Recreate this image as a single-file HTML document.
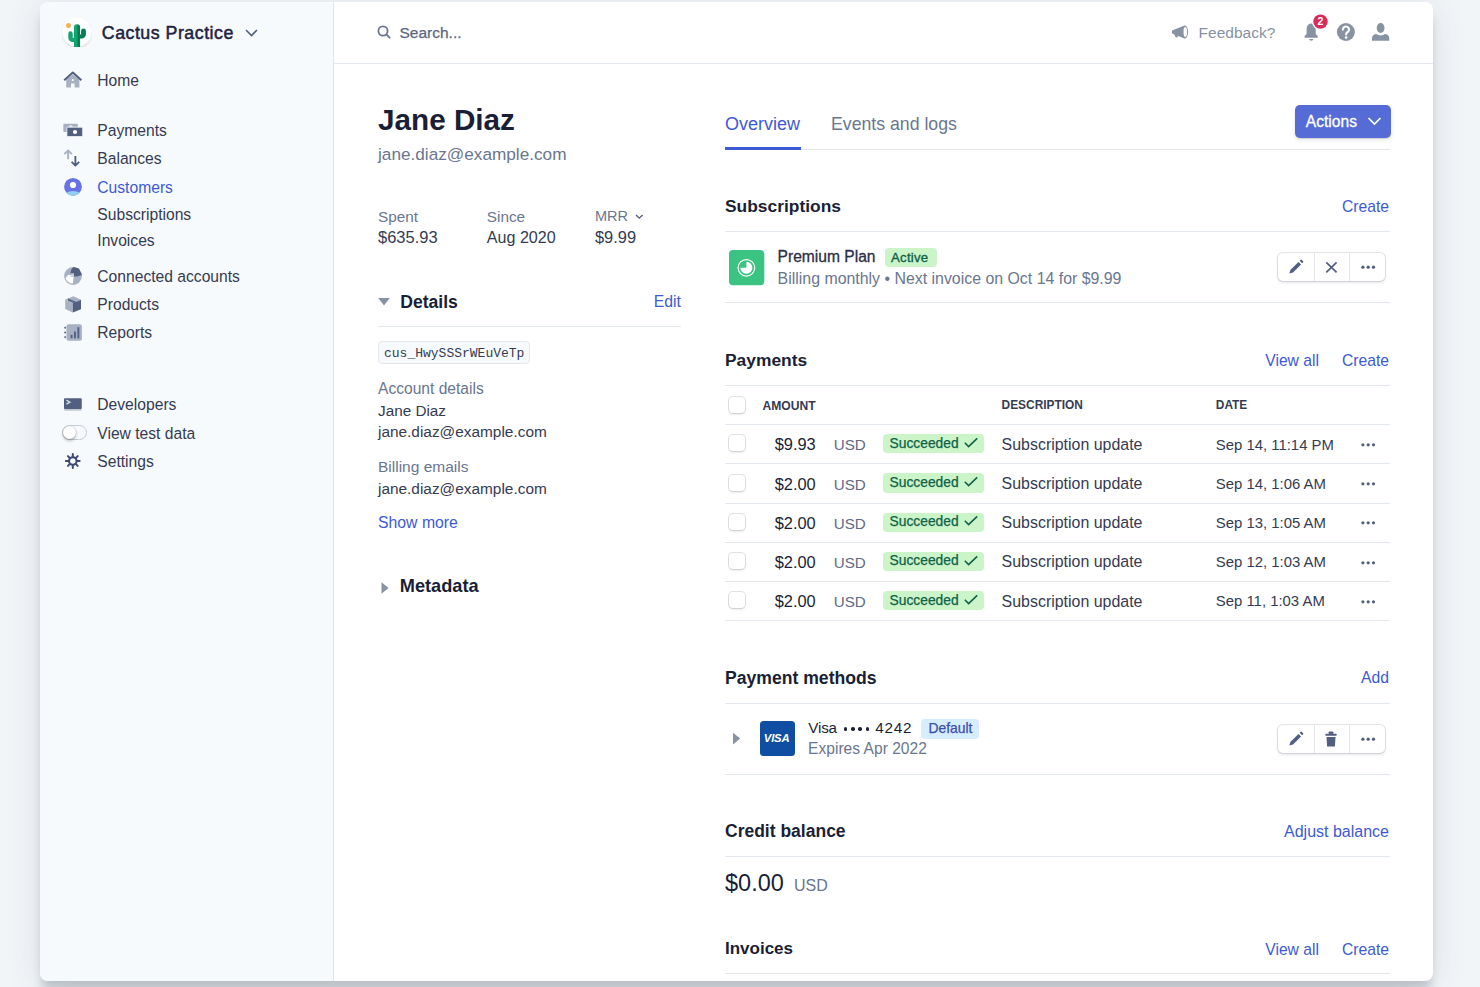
<!DOCTYPE html>
<html><head><meta charset="utf-8">
<style>
html,body{margin:0;padding:0;}
body{width:1480px;height:987px;overflow:hidden;position:relative;background:#f2f5f8;font-family:"Liberation Sans", sans-serif;}
#win{position:absolute;left:40px;top:2px;width:1393px;height:979px;background:#fff;border-radius:8px;box-shadow:0 12px 10px -2px rgba(40,50,70,0.20), 0 5px 34px rgba(50,60,80,0.13);}
.t{position:absolute;white-space:nowrap;}
.r{position:absolute;}
</style></head><body>
<div id="win"></div>
<div class="r" style="left:40px;top:2px;width:293px;height:979px;background:#f7fafc;border-radius:8px 0 0 8px;"></div>
<div class="r" style="left:333px;top:2px;width:1px;height:979px;background:#e0e5ee;"></div>
<svg class="r" style="left:62px;top:17px" width="30" height="30" viewBox="0 0 30 30">
<defs><filter id="ls" x="-20%" y="-20%" width="140%" height="140%"><feDropShadow dx="0" dy="1.2" stdDeviation="1.1" flood-color="#000" flood-opacity="0.16"/></filter></defs>
<circle cx="15" cy="15" r="14.5" fill="#fff" filter="url(#ls)"/>
<circle cx="6.5" cy="8.5" r="2.5" fill="#f0b35a"/>
<path d="M12 31 V10.5 A3.05 3.05 0 0 1 15.1 7.3 V31 Z" fill="#11a66f"/>
<path d="M15.1 7.3 A3.05 3.05 0 0 1 18.1 10.5 V31 H15.1 Z" fill="#0c7a52"/>
<path d="M6.3 16.4 A2.2 2.2 0 0 1 10.7 16.4 V20.8 H12.5 V25 H10.5 A4.2 4.2 0 0 1 6.3 20.8 Z" fill="#11a66f"/>
<path d="M19.1 13.9 A2.4 2.4 0 0 1 23.9 13.9 V17.4 A4.2 4.2 0 0 1 19.7 21.6 H17.8 V17.5 H19.1 Z" fill="#0c7a52"/>
</svg>
<div class="t" style="left:101.8px;top:24.63px;font-size:17.8px;line-height:17.8px;color:#1f2440;-webkit-text-stroke:0.5px #1f2440;letter-spacing:0.5px;">Cactus Practice</div>
<svg class="r" style="left:245px;top:29px" width="13" height="8" viewBox="0 0 13 8"><path d="M1 1 L6.5 6.5 L12 1" fill="none" stroke="#525f81" stroke-width="1.6"/></svg>
<div class="t" style="left:97.3px;top:72.85px;font-size:15.65px;line-height:15.65px;color:#353b52;">Home</div>
<div class="t" style="left:97.3px;top:122.85px;font-size:15.65px;line-height:15.65px;color:#353b52;">Payments</div>
<div class="t" style="left:97.3px;top:151.25px;font-size:15.65px;line-height:15.65px;color:#353b52;">Balances</div>
<div class="t" style="left:97.3px;top:179.55px;font-size:15.65px;line-height:15.65px;color:#3d5ad6;">Customers</div>
<div class="t" style="left:97.3px;top:206.85px;font-size:15.65px;line-height:15.65px;color:#353b52;">Subscriptions</div>
<div class="t" style="left:97.3px;top:232.95px;font-size:15.65px;line-height:15.65px;color:#353b52;">Invoices</div>
<div class="t" style="left:97.3px;top:268.85px;font-size:15.65px;line-height:15.65px;color:#353b52;">Connected accounts</div>
<div class="t" style="left:97.3px;top:297.05px;font-size:15.65px;line-height:15.65px;color:#353b52;">Products</div>
<div class="t" style="left:97.3px;top:325.25px;font-size:15.65px;line-height:15.65px;color:#353b52;">Reports</div>
<div class="t" style="left:97.3px;top:397.05px;font-size:15.65px;line-height:15.65px;color:#353b52;">Developers</div>
<div class="t" style="left:97.3px;top:425.65px;font-size:15.65px;line-height:15.65px;color:#353b52;">View test data</div>
<div class="t" style="left:97.3px;top:453.65px;font-size:15.65px;line-height:15.65px;color:#353b52;">Settings</div>
<div class="r" style="left:334px;top:63px;width:1099px;height:1px;background:#e3e8ee;"></div>
<svg class="r" style="left:377px;top:25px" width="14" height="14" viewBox="0 0 14 14"><circle cx="6" cy="6" r="4.6" fill="none" stroke="#6a7690" stroke-width="1.8"/><path d="M9.4 9.4 L12.6 12.6" stroke="#6a7690" stroke-width="2" stroke-linecap="round"/></svg>
<div class="t" style="left:399.5px;top:24.88px;font-size:15.5px;line-height:15.5px;color:#5b6680;-webkit-text-stroke:0.25px #5b6680;">Search...</div>
<div class="t" style="left:1198.6px;top:24.88px;font-size:15.5px;line-height:15.5px;color:#8792a2;">Feedback?</div>
<div class="t" style="left:378px;top:104.66px;font-size:29.7px;line-height:29.7px;color:#1a1f36;font-weight:700;">Jane Diaz</div>
<div class="t" style="left:378px;top:145.94px;font-size:17.2px;line-height:17.2px;color:#6a7690;">jane.diaz@example.com</div>
<div class="t" style="left:378px;top:208.65px;font-size:15.3px;line-height:15.3px;color:#6a7690;">Spent</div>
<div class="t" style="left:378px;top:228.83px;font-size:16.5px;line-height:16.5px;color:#353b52;">$635.93</div>
<div class="t" style="left:486.8px;top:208.65px;font-size:15.3px;line-height:15.3px;color:#6a7690;">Since</div>
<div class="t" style="left:486.8px;top:229.17px;font-size:16.1px;line-height:16.1px;color:#353b52;">Aug 2020</div>
<div class="t" style="left:595px;top:209.33px;font-size:14.5px;line-height:14.5px;color:#6a7690;">MRR</div>
<div class="t" style="left:595px;top:228.92px;font-size:16.4px;line-height:16.4px;color:#353b52;">$9.99</div>
<div class="t" style="left:400.2px;top:293.50px;font-size:17.6px;line-height:17.6px;color:#1a1f36;font-weight:700;">Details</div>
<div class="t" style="right:799px;top:294.23px;font-size:15.8px;line-height:15.8px;color:#3d5ad6;">Edit</div>
<div class="r" style="left:378px;top:326px;width:303px;height:1px;background:#e3e8ee;"></div>
<div class="t" style="left:378px;top:380.79px;font-size:15.6px;line-height:15.6px;color:#6a7690;">Account details</div>
<div class="t" style="left:378px;top:402.65px;font-size:15.3px;line-height:15.3px;color:#353b52;">Jane Diaz</div>
<div class="t" style="left:378px;top:424.06px;font-size:15.4px;line-height:15.4px;color:#353b52;">jane.diaz@example.com</div>
<div class="t" style="left:378px;top:458.98px;font-size:15.5px;line-height:15.5px;color:#6a7690;">Billing emails</div>
<div class="t" style="left:378px;top:481.06px;font-size:15.4px;line-height:15.4px;color:#353b52;">jane.diaz@example.com</div>
<div class="t" style="left:378px;top:514.93px;font-size:15.8px;line-height:15.8px;color:#3d5ad6;">Show more</div>
<div class="t" style="left:399.8px;top:577.09px;font-size:18.2px;line-height:18.2px;color:#1a1f36;font-weight:700;">Metadata</div>
<div class="t" style="left:725px;top:115.26px;font-size:18px;line-height:18px;color:#3d5ad6;">Overview</div>
<div class="t" style="left:831px;top:115.52px;font-size:17.7px;line-height:17.7px;color:#6a7690;">Events and logs</div>
<div class="r" style="left:725px;top:149px;width:665px;height:1px;background:#e3e8ee;"></div>
<div class="r" style="left:725px;top:147px;width:76px;height:3px;background:#3d5ad6;"></div>
<div class="t" style="left:725px;top:198.27px;font-size:17.4px;line-height:17.4px;color:#1a1f36;font-weight:700;">Subscriptions</div>
<div class="t" style="right:91px;top:198.71px;font-size:15.7px;line-height:15.7px;color:#3d5ad6;">Create</div>
<div class="r" style="left:725px;top:231px;width:665px;height:1px;background:#e3e8ee;"></div>
<div class="t" style="left:777.6px;top:248.79px;font-size:15.6px;line-height:15.6px;color:#2a2f45;-webkit-text-stroke:0.3px #2a2f45;">Premium Plan</div>
<div class="t" style="left:777.6px;top:270.54px;font-size:15.9px;line-height:15.9px;color:#6a7690;">Billing monthly • Next invoice on Oct 14 for $9.99</div>
<div class="r" style="left:725px;top:302px;width:665px;height:1px;background:#e3e8ee;"></div>
<div class="t" style="left:725px;top:351.77px;font-size:17.4px;line-height:17.4px;color:#1a1f36;font-weight:700;">Payments</div>
<div class="t" style="right:161px;top:352.71px;font-size:15.7px;line-height:15.7px;color:#3d5ad6;">View all</div>
<div class="t" style="right:91px;top:352.71px;font-size:15.7px;line-height:15.7px;color:#3d5ad6;">Create</div>
<div class="r" style="left:725px;top:385px;width:665px;height:1px;background:#e3e8ee;"></div>
<div class="t" style="left:762.5px;top:400.26px;font-size:12.1px;line-height:12.1px;color:#353b52;font-weight:700;">AMOUNT</div>
<div class="t" style="left:1001.6px;top:400.43px;font-size:11.9px;line-height:11.9px;color:#353b52;font-weight:700;">DESCRIPTION</div>
<div class="t" style="left:1215.8px;top:400.43px;font-size:11.9px;line-height:11.9px;color:#353b52;font-weight:700;">DATE</div>
<div class="r" style="left:725px;top:424px;width:665px;height:1px;background:#e3e8ee;"></div>
<div class="t" style="right:664.3px;top:436.32px;font-size:16.4px;line-height:16.4px;color:#1a1f36;">$9.93</div>
<div class="t" style="left:833.7px;top:437.33px;font-size:15.2px;line-height:15.2px;color:#5f6b85;">USD</div>
<div class="t" style="left:1001.6px;top:436.70px;font-size:15.95px;line-height:15.95px;color:#353b52;">Subscription update</div>
<div class="t" style="left:1215.8px;top:437.59px;font-size:14.9px;line-height:14.9px;color:#353b52;">Sep 14, 11:14 PM</div>
<div class="r" style="left:725px;top:463px;width:665px;height:1px;background:#e3e8ee;"></div>
<div class="t" style="right:664.3px;top:475.52px;font-size:16.4px;line-height:16.4px;color:#1a1f36;">$2.00</div>
<div class="t" style="left:833.7px;top:476.53px;font-size:15.2px;line-height:15.2px;color:#5f6b85;">USD</div>
<div class="t" style="left:1001.6px;top:475.90px;font-size:15.95px;line-height:15.95px;color:#353b52;">Subscription update</div>
<div class="t" style="left:1215.8px;top:476.79px;font-size:14.9px;line-height:14.9px;color:#353b52;">Sep 14, 1:06 AM</div>
<div class="r" style="left:725px;top:503px;width:665px;height:1px;background:#e3e8ee;"></div>
<div class="t" style="right:664.3px;top:514.72px;font-size:16.4px;line-height:16.4px;color:#1a1f36;">$2.00</div>
<div class="t" style="left:833.7px;top:515.73px;font-size:15.2px;line-height:15.2px;color:#5f6b85;">USD</div>
<div class="t" style="left:1001.6px;top:515.10px;font-size:15.95px;line-height:15.95px;color:#353b52;">Subscription update</div>
<div class="t" style="left:1215.8px;top:515.99px;font-size:14.9px;line-height:14.9px;color:#353b52;">Sep 13, 1:05 AM</div>
<div class="r" style="left:725px;top:542px;width:665px;height:1px;background:#e3e8ee;"></div>
<div class="t" style="right:664.3px;top:553.92px;font-size:16.4px;line-height:16.4px;color:#1a1f36;">$2.00</div>
<div class="t" style="left:833.7px;top:554.93px;font-size:15.2px;line-height:15.2px;color:#5f6b85;">USD</div>
<div class="t" style="left:1001.6px;top:554.30px;font-size:15.95px;line-height:15.95px;color:#353b52;">Subscription update</div>
<div class="t" style="left:1215.8px;top:555.19px;font-size:14.9px;line-height:14.9px;color:#353b52;">Sep 12, 1:03 AM</div>
<div class="r" style="left:725px;top:581px;width:665px;height:1px;background:#e3e8ee;"></div>
<div class="t" style="right:664.3px;top:593.12px;font-size:16.4px;line-height:16.4px;color:#1a1f36;">$2.00</div>
<div class="t" style="left:833.7px;top:594.13px;font-size:15.2px;line-height:15.2px;color:#5f6b85;">USD</div>
<div class="t" style="left:1001.6px;top:593.50px;font-size:15.95px;line-height:15.95px;color:#353b52;">Subscription update</div>
<div class="t" style="left:1215.8px;top:594.39px;font-size:14.9px;line-height:14.9px;color:#353b52;">Sep 11, 1:03 AM</div>
<div class="r" style="left:725px;top:620px;width:665px;height:1px;background:#e3e8ee;"></div>
<div class="t" style="left:725px;top:669.60px;font-size:17.6px;line-height:17.6px;color:#1a1f36;font-weight:700;">Payment methods</div>
<div class="t" style="right:91px;top:669.71px;font-size:15.7px;line-height:15.7px;color:#3d5ad6;">Add</div>
<div class="r" style="left:725px;top:703px;width:665px;height:1px;background:#e3e8ee;"></div>
<div class="t" style="left:808.3px;top:720.13px;font-size:15.2px;line-height:15.2px;color:#1a1f36;letter-spacing:-0.2px;">Visa</div>
<div class="r" style="left:843.7px;top:727.2px;width:3.6px;height:3.6px;background:#1a1f36;border-radius:50%;"></div>
<div class="r" style="left:851.2px;top:727.2px;width:3.6px;height:3.6px;background:#1a1f36;border-radius:50%;"></div>
<div class="r" style="left:858.4000000000001px;top:727.2px;width:3.6px;height:3.6px;background:#1a1f36;border-radius:50%;"></div>
<div class="r" style="left:865.7px;top:727.2px;width:3.6px;height:3.6px;background:#1a1f36;border-radius:50%;"></div>
<div class="t" style="left:875.3px;top:719.85px;font-size:15.3px;line-height:15.3px;color:#1a1f36;letter-spacing:0.7px;">4242</div>
<div class="t" style="left:808.1px;top:741.49px;font-size:15.6px;line-height:15.6px;color:#6a7690;">Expires Apr 2022</div>
<div class="r" style="left:725px;top:774px;width:665px;height:1px;background:#e3e8ee;"></div>
<div class="t" style="left:725px;top:822.69px;font-size:17.5px;line-height:17.5px;color:#1a1f36;font-weight:700;">Credit balance</div>
<div class="t" style="right:91px;top:823.96px;font-size:16px;line-height:16px;color:#3d5ad6;">Adjust balance</div>
<div class="r" style="left:725px;top:856px;width:665px;height:1px;background:#e3e8ee;"></div>
<div class="t" style="left:725px;top:871.61px;font-size:23.5px;line-height:23.5px;color:#1a1f36;">$0.00</div>
<div class="t" style="left:794px;top:877.96px;font-size:16px;line-height:16px;color:#6a7690;">USD</div>
<div class="t" style="left:725px;top:939.81px;font-size:17px;line-height:17px;color:#1a1f36;font-weight:700;">Invoices</div>
<div class="t" style="right:161px;top:941.71px;font-size:15.7px;line-height:15.7px;color:#3d5ad6;">View all</div>
<div class="t" style="right:91px;top:941.71px;font-size:15.7px;line-height:15.7px;color:#3d5ad6;">Create</div>
<div class="r" style="left:725px;top:973px;width:665px;height:1px;background:#e3e8ee;"></div>
<svg class="r" style="left:63px;top:71px" width="20" height="18" viewBox="0 0 20 18">
<path d="M3.2 8.5 V16.5 H8 V12.5 H11.6 V16.5 H16.4 V8.5 L9.8 3.5 Z" fill="#a8b1c4"/>
<path d="M1.2 9.3 L9.8 1.6 L18.4 9.3" fill="none" stroke="#525f81" stroke-width="2" stroke-linejoin="round"/>
<circle cx="9.8" cy="9" r="1.1" fill="#fff"/>
</svg>
<svg class="r" style="left:62px;top:122px" width="22" height="16" viewBox="0 0 22 16">
<rect x="1.3" y="1.7" width="14.6" height="8.2" rx="1" fill="#a8b1c4"/>
<circle cx="8.7" cy="5" r="2" fill="#fff" opacity="0.6"/>
<rect x="4.9" y="5.2" width="15.8" height="9.4" rx="1.3" fill="#525f81" stroke="#f7fafc" stroke-width="0.8"/>
<circle cx="13" cy="10" r="2.1" fill="#fff"/>
</svg>
<svg class="r" style="left:62px;top:148px" width="20" height="20" viewBox="0 0 20 20">
<path d="M6.1 11.3 V2.5 M2.3 6.2 L6.1 2.4 L9.9 6.2" fill="none" stroke="#a8b1c4" stroke-width="1.9" stroke-linejoin="round"/>
<path d="M13.4 8 V17.6 M9.6 13.8 L13.4 17.6 L17.2 13.8" fill="none" stroke="#525f81" stroke-width="1.9" stroke-linejoin="round"/>
</svg>
<svg class="r" style="left:63px;top:177px" width="20" height="20" viewBox="0 0 20 20">
<defs><clipPath id="cc"><circle cx="10" cy="9.8" r="8.9"/></clipPath></defs>
<circle cx="10" cy="9.8" r="8.9" fill="#6772e5"/>
<g clip-path="url(#cc)"><ellipse cx="10" cy="20.5" rx="10" ry="6.5" fill="#8ed0ed"/></g>
<circle cx="10" cy="8" r="3.1" fill="#fff"/>
</svg>
<svg class="r" style="left:63px;top:266px" width="20" height="20" viewBox="0 0 20 20">
<circle cx="10" cy="10" r="8.9" fill="#a8b1c4"/>
<path d="M7.5 8.5 A8.9 8.9 0 0 1 10.5 1.1 L16 2.5 L19 9 L14 10.5 L11 10.5 Z" fill="#525f81"/>
<path d="M2.5 12 A8 8 0 0 0 10 17.5 L10.5 11 L9 9 L5 9 Z" fill="#fff"/>
<rect x="7.6" y="7.3" width="3.4" height="3.6" fill="#c8ced8"/>
</svg>
<svg class="r" style="left:63px;top:295px" width="20" height="20" viewBox="0 0 20 20">
<path d="M2.2 4.6 L10.4 1.3 L18 4.8 L9.8 8.2 Z" fill="#a8b1c4"/>
<path d="M2.2 4.6 L9.8 8.2 L9.8 17.5 L2.2 14.1 Z" fill="#a8b1c4"/>
<path d="M9.8 8.2 L18 4.8 L18 14.2 L9.8 17.5 Z" fill="#525f81"/>
<path d="M5 3.5 L13 6.8 L13 9 L5 5.8 Z" fill="#525f81" opacity="0.9"/>
</svg>
<svg class="r" style="left:63px;top:323px" width="20" height="20" viewBox="0 0 20 20">
<rect x="3.5" y="1.2" width="15.4" height="16.6" rx="2" fill="#a8b1c4"/>
<circle cx="2.2" cy="4.8" r="1.3" fill="#525f81" stroke="#fff" stroke-width="0.6"/>
<circle cx="2.2" cy="9.5" r="1.3" fill="#525f81" stroke="#fff" stroke-width="0.6"/>
<circle cx="2.2" cy="14.1" r="1.3" fill="#525f81" stroke="#fff" stroke-width="0.6"/>
<rect x="7.6" y="11.8" width="1.9" height="3.5" fill="#525f81"/>
<rect x="11" y="8.5" width="1.9" height="6.8" fill="#525f81"/>
<rect x="14.4" y="4.2" width="1.9" height="11.1" fill="#525f81"/>
</svg>
<svg class="r" style="left:63px;top:395.5px" width="20" height="16" viewBox="0 0 20 16">
<rect x="1" y="3.8" width="17.7" height="11" rx="1" fill="#c1c9d2"/>
<rect x="1" y="2.2" width="17.7" height="10.8" rx="1" fill="#525f81"/>
<path d="M3.4 4.2 L6.9 6.2 L3.4 8.2" fill="none" stroke="#d5dbe3" stroke-width="1.4"/>
</svg>
<div class="r" style="left:62px;top:425px;width:23px;height:13px;border:1px solid #c6cdd6;border-radius:8px;background:#f7fafc;"></div>
<div class="r" style="left:62.5px;top:425.5px;width:13.5px;height:13.5px;border-radius:50%;background:#fff;box-shadow:0 2px 3px rgba(0,0,0,0.25), 0 0 0 0.6px rgba(0,0,0,0.14);"></div>
<svg class="r" style="left:63px;top:451px" width="20" height="20" viewBox="0 0 20 20">
<g transform="translate(9.8 10)" stroke="#3d4a75" stroke-width="2.0" stroke-linecap="round">
<path d="M0 -6.9 V6.9 M-6.9 0 H6.9 M-4.9 -4.9 L4.9 4.9 M-4.9 4.9 L4.9 -4.9"/>
</g>
<circle cx="9.8" cy="10" r="4.8" fill="#3d4a75"/>
<circle cx="9.8" cy="10" r="2.7" fill="#f7fafc"/>
</svg>
<svg class="r" style="left:1170px;top:24px" width="20" height="16" viewBox="0 0 20 16">
<path d="M2 6.5 L14.5 1.5 L14.5 14.5 L2 9.5 Z" fill="#8792a2"/>
<path d="M4.2 9.5 L5.5 13.2 L7.6 13.6 L7.8 10.7 Z" fill="#8792a2"/>
<ellipse cx="15" cy="8" rx="3.1" ry="6.5" fill="#8792a2"/>
<ellipse cx="15.3" cy="8" rx="1.8" ry="5" fill="#fff"/>
</svg>
<svg class="r" style="left:1300px;top:12px" width="32" height="32" viewBox="0 0 32 32">
<path d="M11 11.5 C7.5 11.8 6.6 15 6.6 18 V22 L4.6 24 V25.7 H17.7 V24 L15.7 22 V18 C15.7 15 14.8 11.8 11 11.5 Z" fill="#8792a2"/>
<path d="M9 27 H13.5 A2.3 2.1 0 0 1 9 27 Z" fill="#8792a2"/>
<circle cx="20.5" cy="9.6" r="8.5" fill="#fff"/>
<circle cx="20.5" cy="9.6" r="7.2" fill="#d92a5a"/>
<text x="20.5" y="13.4" text-anchor="middle" font-family="Liberation Sans" font-weight="700" font-size="10.5" fill="#fff">2</text>
</svg>
<svg class="r" style="left:1336px;top:22px" width="20" height="20" viewBox="0 0 20 20">
<circle cx="9.9" cy="10" r="9" fill="#8792a2"/>
<path d="M6.9 7.6 A3.1 3 0 1 1 11.7 10 C10.6 10.6 10.1 11 10.1 12.5" fill="none" stroke="#fff" stroke-width="2.1" stroke-linecap="round"/>
<circle cx="10.1" cy="15.5" r="1.35" fill="#fff"/>
</svg>
<svg class="r" style="left:1371px;top:22px" width="20" height="20" viewBox="0 0 20 20">
<ellipse cx="9.6" cy="6" rx="3.9" ry="4.9" fill="#8792a2"/>
<path d="M1 18.7 V16.5 C1 13.6 3 12 5.5 12 H13.7 C16.2 12 18.3 13.6 18.3 16.5 V18.7 Z" fill="#8792a2"/>
<path d="M5.5 11.5 Q9.6 14 13.7 11.5" fill="none" stroke="#fff" stroke-width="1.3"/>
</svg>
<svg class="r" style="left:634px;top:213px" width="10" height="7" viewBox="0 0 10 7"><path d="M2 2 L5.3 5.2 L8.6 2" fill="none" stroke="#4f5b76" stroke-width="1.3"/></svg>
<svg class="r" style="left:377px;top:297px" width="14" height="10" viewBox="0 0 14 10"><path d="M1.2 1 H12.8 L7 8.4 Z" fill="#8792a2"/></svg>
<div class="r" style="left:378px;top:340.5px;width:151.5px;height:23px;background:#f7fafc;border:1px solid #e3e8ee;border-radius:4px;box-sizing:border-box;"></div>
<div class="t" style="left:384px;top:346.50px;font-size:13.0px;line-height:13.0px;color:#353b52;font-family:'Liberation Mono', monospace;">cus_HwySSSrWEuVeTp</div>
<svg class="r" style="left:379px;top:580px" width="12" height="16" viewBox="0 0 12 16"><path d="M2.5 2.2 V13.8 L9.6 8 Z" fill="#8792a2"/></svg>
<div class="r" style="left:1295px;top:105px;width:96px;height:33px;background:#556cd6;border-radius:5px;box-shadow:0 1px 1px rgba(0,0,0,0.12), 0 2px 5px rgba(60,66,87,0.12);"></div>
<div class="t" style="left:1305.8px;top:113.99px;font-size:15.6px;line-height:15.6px;color:#fff;-webkit-text-stroke:0.3px #fff;">Actions</div>
<svg class="r" style="left:1367px;top:116px" width="15" height="10" viewBox="0 0 15 10"><path d="M1.5 2 L7.5 8 L13.5 2" fill="none" stroke="#fff" stroke-width="1.7"/></svg>
<svg class="r" style="left:729px;top:249.5px" width="36" height="36" viewBox="0 0 36 36">
<rect x="0" y="0" width="35.3" height="35.3" rx="4" fill="#3ac381"/>
<circle cx="17.4" cy="17.8" r="8.3" fill="none" stroke="#fff" stroke-width="1.25"/>
<path d="M17.4 17.8 V11.8 A6 6 0 1 1 11.4 17.8 Z" fill="#fff"/>
</svg>
<div class="r" style="left:884.5px;top:247.5px;width:52.5px;height:19.5px;background:#cbf4c9;border-radius:4px;"></div>
<div class="t" style="left:891px;top:250.83px;font-size:13.2px;line-height:13.2px;color:#0e6245;-webkit-text-stroke:0.35px #0e6245;letter-spacing:0.25px;">Active</div>
<div class="r" style="left:1278px;top:253.3px;width:107px;height:27.5px;background:#fff;border-radius:5px;box-shadow:0 0 0 1px rgba(60,66,87,0.14), 0 2px 3px rgba(60,66,87,0.12);"></div>
<div class="r" style="left:1313.5px;top:253.3px;width:1px;height:27.5px;background:rgba(60,66,87,0.14);"></div>
<div class="r" style="left:1349.3px;top:253.3px;width:1px;height:27.5px;background:rgba(60,66,87,0.14);"></div>
<svg class="r" style="left:1287px;top:259.3px" width="18" height="16" viewBox="0 0 18 16">
<path d="M2.4 14.6 L3.4 11 L11.5 2.9 L14.1 5.5 L6 13.6 Z" fill="#525f81"/>
<path d="M12.6 1.8 L13.5 0.9 A0.9 0.9 0 0 1 14.8 0.9 L16 2.1 A0.9 0.9 0 0 1 16 3.4 L15.2 4.3 Z" fill="#525f81"/>
</svg>
<svg class="r" style="left:1323px;top:260.3px" width="16" height="14" viewBox="0 0 16 14"><path d="M3.3 2.3 L13.6 12.4 M13.6 2.3 L3.3 12.4" stroke="#525f81" stroke-width="1.7"/></svg>
<svg class="r" style="left:1359px;top:262.3px" width="18" height="10" viewBox="0 0 18 10">
<circle cx="3.9" cy="5.2" r="1.65" fill="#525f81"/><circle cx="9.2" cy="5.2" r="1.65" fill="#525f81"/><circle cx="14.5" cy="5.2" r="1.65" fill="#525f81"/></svg>
<div class="r" style="left:1278px;top:725px;width:107px;height:27.5px;background:#fff;border-radius:5px;box-shadow:0 0 0 1px rgba(60,66,87,0.14), 0 2px 3px rgba(60,66,87,0.12);"></div>
<div class="r" style="left:1313.5px;top:725px;width:1px;height:27.5px;background:rgba(60,66,87,0.14);"></div>
<div class="r" style="left:1349.3px;top:725px;width:1px;height:27.5px;background:rgba(60,66,87,0.14);"></div>
<svg class="r" style="left:1287px;top:731px" width="18" height="16" viewBox="0 0 18 16">
<path d="M2.4 14.6 L3.4 11 L11.5 2.9 L14.1 5.5 L6 13.6 Z" fill="#525f81"/>
<path d="M12.6 1.8 L13.5 0.9 A0.9 0.9 0 0 1 14.8 0.9 L16 2.1 A0.9 0.9 0 0 1 16 3.4 L15.2 4.3 Z" fill="#525f81"/>
</svg>
<svg class="r" style="left:1323px;top:730px" width="16" height="18" viewBox="0 0 16 18">
<rect x="5.5" y="1.5" width="5" height="2.5" rx="1" fill="#525f81"/><rect x="2.3" y="3.8" width="11.4" height="2" rx="0.8" fill="#525f81"/>
<path d="M3.5 7 H12.5 L11.9 16.5 H4.1 Z" fill="#525f81"/></svg>
<svg class="r" style="left:1359px;top:734px" width="18" height="10" viewBox="0 0 18 10">
<circle cx="3.9" cy="5.2" r="1.65" fill="#525f81"/><circle cx="9.2" cy="5.2" r="1.65" fill="#525f81"/><circle cx="14.5" cy="5.2" r="1.65" fill="#525f81"/></svg>
<div class="r" style="left:728.5px;top:396.5px;width:16.5px;height:16px;background:#fff;border-radius:4px;box-shadow:0 0 0 1px rgba(60,66,87,0.16), 0 2px 2px rgba(60,66,87,0.10);"></div>
<div class="r" style="left:728.5px;top:435.3px;width:16.5px;height:16px;background:#fff;border-radius:4px;box-shadow:0 0 0 1px rgba(60,66,87,0.16), 0 2px 2px rgba(60,66,87,0.10);"></div>
<div class="r" style="left:882.5px;top:434.2px;width:101px;height:19.2px;background:#cbf4c9;border-radius:4px;"></div>
<div class="t" style="left:889.6px;top:436.72px;font-size:13.8px;line-height:13.8px;color:#0e6245;-webkit-text-stroke:0.25px #0e6245;">Succeeded</div>
<svg class="r" style="left:963px;top:437.0px" width="16" height="12" viewBox="0 0 16 12"><path d="M1.8 5.8 L5.6 9.6 L14.2 1.4" fill="none" stroke="#0e6245" stroke-width="1.6"/></svg>
<svg class="r" style="left:1359px;top:440.0px" width="18" height="10" viewBox="0 0 18 10">
<circle cx="3.9" cy="4.8" r="1.6" fill="#525f81"/><circle cx="9.2" cy="4.8" r="1.6" fill="#525f81"/><circle cx="14.5" cy="4.8" r="1.6" fill="#525f81"/></svg>
<div class="r" style="left:728.5px;top:474.5px;width:16.5px;height:16px;background:#fff;border-radius:4px;box-shadow:0 0 0 1px rgba(60,66,87,0.16), 0 2px 2px rgba(60,66,87,0.10);"></div>
<div class="r" style="left:882.5px;top:473.4px;width:101px;height:19.2px;background:#cbf4c9;border-radius:4px;"></div>
<div class="t" style="left:889.6px;top:475.92px;font-size:13.8px;line-height:13.8px;color:#0e6245;-webkit-text-stroke:0.25px #0e6245;">Succeeded</div>
<svg class="r" style="left:963px;top:476.2px" width="16" height="12" viewBox="0 0 16 12"><path d="M1.8 5.8 L5.6 9.6 L14.2 1.4" fill="none" stroke="#0e6245" stroke-width="1.6"/></svg>
<svg class="r" style="left:1359px;top:479.2px" width="18" height="10" viewBox="0 0 18 10">
<circle cx="3.9" cy="4.8" r="1.6" fill="#525f81"/><circle cx="9.2" cy="4.8" r="1.6" fill="#525f81"/><circle cx="14.5" cy="4.8" r="1.6" fill="#525f81"/></svg>
<div class="r" style="left:728.5px;top:513.7px;width:16.5px;height:16px;background:#fff;border-radius:4px;box-shadow:0 0 0 1px rgba(60,66,87,0.16), 0 2px 2px rgba(60,66,87,0.10);"></div>
<div class="r" style="left:882.5px;top:512.6px;width:101px;height:19.2px;background:#cbf4c9;border-radius:4px;"></div>
<div class="t" style="left:889.6px;top:515.12px;font-size:13.8px;line-height:13.8px;color:#0e6245;-webkit-text-stroke:0.25px #0e6245;">Succeeded</div>
<svg class="r" style="left:963px;top:515.4px" width="16" height="12" viewBox="0 0 16 12"><path d="M1.8 5.8 L5.6 9.6 L14.2 1.4" fill="none" stroke="#0e6245" stroke-width="1.6"/></svg>
<svg class="r" style="left:1359px;top:518.4px" width="18" height="10" viewBox="0 0 18 10">
<circle cx="3.9" cy="4.8" r="1.6" fill="#525f81"/><circle cx="9.2" cy="4.8" r="1.6" fill="#525f81"/><circle cx="14.5" cy="4.8" r="1.6" fill="#525f81"/></svg>
<div class="r" style="left:728.5px;top:552.9px;width:16.5px;height:16px;background:#fff;border-radius:4px;box-shadow:0 0 0 1px rgba(60,66,87,0.16), 0 2px 2px rgba(60,66,87,0.10);"></div>
<div class="r" style="left:882.5px;top:551.8px;width:101px;height:19.2px;background:#cbf4c9;border-radius:4px;"></div>
<div class="t" style="left:889.6px;top:554.32px;font-size:13.8px;line-height:13.8px;color:#0e6245;-webkit-text-stroke:0.25px #0e6245;">Succeeded</div>
<svg class="r" style="left:963px;top:554.6px" width="16" height="12" viewBox="0 0 16 12"><path d="M1.8 5.8 L5.6 9.6 L14.2 1.4" fill="none" stroke="#0e6245" stroke-width="1.6"/></svg>
<svg class="r" style="left:1359px;top:557.6px" width="18" height="10" viewBox="0 0 18 10">
<circle cx="3.9" cy="4.8" r="1.6" fill="#525f81"/><circle cx="9.2" cy="4.8" r="1.6" fill="#525f81"/><circle cx="14.5" cy="4.8" r="1.6" fill="#525f81"/></svg>
<div class="r" style="left:728.5px;top:592.1px;width:16.5px;height:16px;background:#fff;border-radius:4px;box-shadow:0 0 0 1px rgba(60,66,87,0.16), 0 2px 2px rgba(60,66,87,0.10);"></div>
<div class="r" style="left:882.5px;top:591.0px;width:101px;height:19.2px;background:#cbf4c9;border-radius:4px;"></div>
<div class="t" style="left:889.6px;top:593.52px;font-size:13.8px;line-height:13.8px;color:#0e6245;-webkit-text-stroke:0.25px #0e6245;">Succeeded</div>
<svg class="r" style="left:963px;top:593.8px" width="16" height="12" viewBox="0 0 16 12"><path d="M1.8 5.8 L5.6 9.6 L14.2 1.4" fill="none" stroke="#0e6245" stroke-width="1.6"/></svg>
<svg class="r" style="left:1359px;top:596.8px" width="18" height="10" viewBox="0 0 18 10">
<circle cx="3.9" cy="4.8" r="1.6" fill="#525f81"/><circle cx="9.2" cy="4.8" r="1.6" fill="#525f81"/><circle cx="14.5" cy="4.8" r="1.6" fill="#525f81"/></svg>
<svg class="r" style="left:731px;top:731px" width="12" height="16" viewBox="0 0 12 16"><path d="M2 1.7 V13.4 L9.2 7.5 Z" fill="#8792a2"/></svg>
<div class="r" style="left:759.5px;top:721px;width:35px;height:35px;background:#0f4ea3;border-radius:3.5px;"></div>
<div class="t" style="left:763.8px;top:733.03px;font-size:11.3px;line-height:11.3px;color:#fff;font-weight:700;font-style:italic;letter-spacing:-0.2px;">VISA</div>
<div class="r" style="left:920.8px;top:719.2px;width:58.4px;height:19.4px;background:#d6ecff;border-radius:4px;"></div>
<div class="t" style="left:928.4px;top:722.03px;font-size:13.9px;line-height:13.9px;color:#3d4eac;-webkit-text-stroke:0.25px #3d4eac;">Default</div>
</body></html>
